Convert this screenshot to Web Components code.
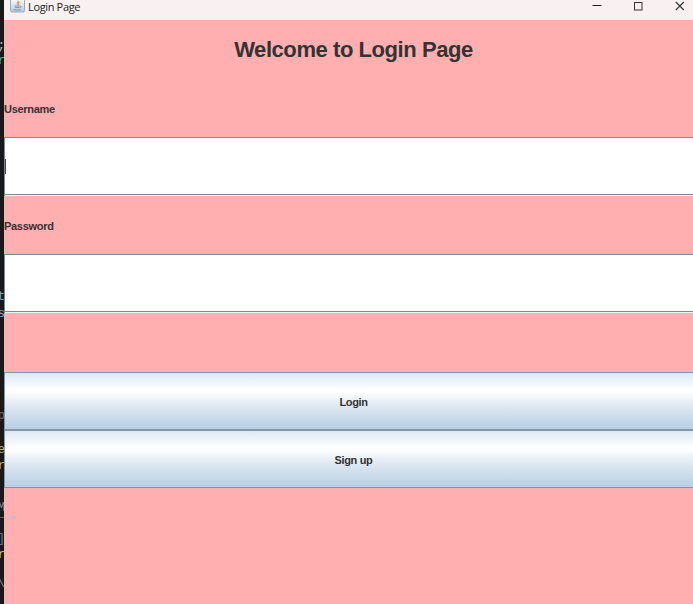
<!DOCTYPE html>
<html lang="en"><head><meta charset="utf-8"><title>Login Page</title>
<style>
html,body{margin:0;height:604px;overflow:hidden;background:#191919}
body{font-family:"Liberation Sans",Arial,sans-serif;color:#333}
</style></head><body>
<desktop-view>
<editor-edge slot="edge"></editor-edge>
<app-window>
<title-bar slot="title">Login Page</title-bar>
<page-heading>Welcome to Login Page</page-heading>
<field-label>Username</field-label>
<text-field focused></text-field>
<field-label>Password</field-label>
<text-field></text-field>
<row-space></row-space>
<metal-button>Login</metal-button>
<metal-button>Sign up</metal-button>
</app-window>
</desktop-view>
<script>
const define = (name, html) => customElements.define(name, class extends HTMLElement {
  constructor() { super(); this.attachShadow({mode: "open"}).innerHTML = html; }
});

define("desktop-view", `<style>:host{display:grid;grid-template-columns:4px 699px;width:693px;height:604px;overflow:hidden}</style><slot name="edge"></slot><slot></slot>`);

define("app-window", `<style>
:host{display:flex;flex-direction:column;height:604px;background:#ffafaf;overflow:hidden}
.rows{display:grid;grid-template-rows:59px 58px 59px 58px 59px 59px 58px 58px;flex:1;align-content:start}
</style><slot name="title"></slot><div class="rows"><slot></slot></div>`);

define("title-bar", `<style>
:host{display:flex;box-sizing:border-box;width:689px;height:19.5px;background:#f9f0f1;color:#222;font:11px/13px "Open Sans","Noto Sans",sans-serif;letter-spacing:-.35px}
.icon{flex:none;width:15px;height:13px;margin-left:6px}
.name{margin-left:3px;flex:1}
.controls{flex:none;width:104px;height:14px}
svg{display:block}
</style>
<svg class="icon" viewBox="0 0 15 13"><defs><linearGradient id="g" x2="0" y2="1"><stop stop-color="#fff"/><stop offset="1" stop-color="#b7cbdc"/></linearGradient></defs>
<rect x=".5" y="-2.5" width="14" height="14.5" rx="1.5" fill="url(#g)" stroke="#9aaab7"/>
<path d="M7.800 .5C9 2 6.200 2.600 7.500 4.500M9.500 2C8 2.800 9 3.300 8.500 4.800" fill="none" stroke="#e59035" stroke-width="1.100"/>
<path d="M4.500 6h5.300M5 7.600h4.500M10 6.200c1.600-.1 1.300 1.400-.3 1.500M3.500 9.700q4 .9 7.500 0" fill="none" stroke="#6f8ca3" stroke-width=".9"/></svg>
<span class="name"><slot></slot></span>
<svg class="controls" viewBox="0 0 104 14"><path d="M3.500 5.500h9" stroke="#222"/><rect x="45.500" y="2.500" width="7.500" height="7.500" fill="none" stroke="#333"/><path d="M86.800 2l8 8m0-8l-8 8" stroke="#333" stroke-width="1.100"/></svg>`);

define("page-heading", `<style>:host{display:flex;align-items:center;justify-content:center;padding-top:2px;font-size:22px;font-weight:bold;line-height:26px;letter-spacing:-.43px;white-space:nowrap}</style><span><slot></slot></span>`);
define("field-label", `<style>:host{display:flex;align-items:center;padding-top:3px;font-size:11px;font-weight:bold;line-height:13px;letter-spacing:-.3px}</style><span><slot></slot></span>`);
define("row-space", `<style>:host{display:block}</style>`);

define("text-field", `<style>
:host{display:flex;align-items:center;box-sizing:border-box;background:#fff;border:1px solid #7a8a99;border-bottom:0;box-shadow:inset 0 -1px #eef1f5,inset 0 -2px #7a8a99}
i{display:none;width:1px;height:15px;background:#444}
:host([focused]) i{display:block}
</style><i></i>`);

define("metal-button", `<style>
:host{display:flex;align-items:center;justify-content:center;box-sizing:border-box;padding-top:3px;border:1px solid #8497aa;background:linear-gradient(#dde8f3 0%,#fff 30%,#fff 33%,#dce7f2 60%,#b8cfe5 100%);font-size:11px;font-weight:bold;line-height:13px;letter-spacing:-.35px}
</style><span><slot></slot></span>`);

/* The sliver of the code editor visible left of the window. */
const glyphs = [[";",39,"#bbb"],["r",54,"#3dc0a5"],["t",290,"#6faed8"],["s",307,"#6faed8"],["p",409,"#777"],["e",443,"#b9b98b"],["r",459,"#b9b98b"],["M",501,"#888"],["]",532,"#777"],["r",548,"#c4c4a2"],["\\",577,"#888"]];
define("editor-edge", `<style>
:host{display:block;position:relative;height:604px;overflow:hidden;background:#191919}
span{position:absolute;right:-1px;font:12px/14px "Liberation Mono",monospace}
b{position:absolute;top:517px;width:4px;height:1px;background:#176baf}
</style>${glyphs.map(([c,y,k]) => `<span style="top:${y}px;color:${k}">${c}</span>`).join("")}<b></b>`);
</script></body></html>
